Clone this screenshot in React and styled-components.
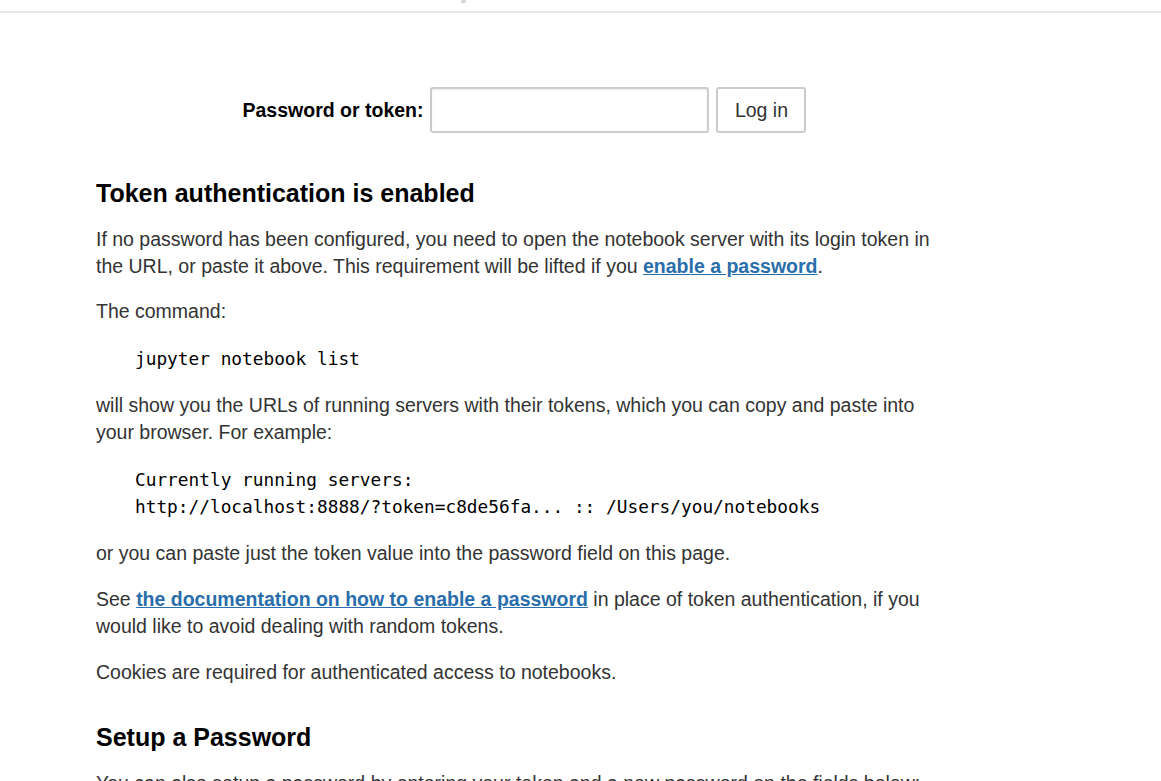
import React from "react";
import styled, { createGlobalStyle } from "styled-components";

const GlobalStyle = createGlobalStyle`
  html, body {
    margin: 0;
    padding: 0;
    background: #fff;
  }
  body {
    font-family: "Liberation Sans", Arial, sans-serif;
    font-size: 19.5px;
    line-height: 27px;
    color: #333;
  }
`;

//? Header
const Header = styled.header`
  height: 11px;
  border-bottom: 2px solid #e7e7e7;
  display: flex;
  padding-left: 460px;
  overflow: hidden;
`;

const Logo = styled.svg`
  display: block;
`;

//? Page
const Page = styled.main`
  width: 850px;
  padding: 74px 0 0 96px;
`;

const LoginForm = styled.form`
  display: flex;
  align-items: center;
  justify-content: center;
  gap: 7px;
  padding-left: 7px;
  margin-bottom: 47px;
`;

const Label = styled.label`
  font-weight: bold;
  color: #000;
`;

const TokenInput = styled.input`
  box-sizing: border-box;
  width: 279px;
  height: 46px;
  border: 2px solid #ccc;
  border-radius: 3px;
  box-shadow: inset 0 1px 2px rgba(0, 0, 0, 0.08);
  padding: 6px 12px;
  font: inherit;
  outline: none;
`;

const LoginButton = styled.button`
  box-sizing: border-box;
  height: 46px;
  width: 90px;
  background: #fff;
  border: 2px solid #ccc;
  border-radius: 3px;
  color: #333;
  font-family: "Liberation Sans", Arial, sans-serif;
  font-size: 19.5px;
  padding: 0;
`;

const Heading = styled.h3`
  font-size: 25px;
  line-height: 27px;
  font-weight: bold;
  color: #000;
  margin: ${(p) => (p.$spaced ? "38px" : "0")} 0 19px;
`;

const Para = styled.p`
  margin: 0 0 ${(p) => p.$gap || 18}px;
`;

const Link = styled.a`
  color: #296eaa;
  font-weight: bold;
  text-decoration: underline;
`;

const CodeBlock = styled.pre`
  margin: 0 0 18px;
  padding: 2px 0 2px 39px;
  font-family: "DejaVu Sans Mono", monospace;
  font-size: 17.8px;
  line-height: 27px;
  color: #000;
  white-space: pre;
`;

const App = () => {
  return (
    <>
      <GlobalStyle />
      <Header>
        <Logo width='7' height='7' viewBox='0 0 7 7'>
          <ellipse cx='3.5' cy='1.5' rx='2.5' ry='2' fill='#d6d6d6' />
        </Logo>
      </Header>
      <Page>
        <LoginForm onSubmit={(e) => e.preventDefault()}>
          <Label htmlFor='password_input'>Password or token:</Label>
          <TokenInput type='password' id='password_input' />
          <LoginButton type='submit'>Log in</LoginButton>
        </LoginForm>

        <Heading>Token authentication is enabled</Heading>
        <Para>
          If no password has been configured, you need to open the notebook
          server with its login token in the URL, or paste it above. This
          requirement will be lifted if you{" "}
          <Link href='#'>enable a password</Link>.
        </Para>
        <Para>The command:</Para>
        <CodeBlock>jupyter notebook list</CodeBlock>
        <Para>
          will show you the URLs of running servers with their tokens, which
          you can copy and paste into your browser. For example:
        </Para>
        <CodeBlock>
          {`Currently running servers:
http://localhost:8888/?token=c8de56fa... :: /Users/you/notebooks`}
        </CodeBlock>
        <Para $gap={19}>
          or you can paste just the token value into the password field on
          this page.
        </Para>
        <Para $gap={19}>
          See{" "}
          <Link href='#'>the documentation on how to enable a password</Link>{" "}
          in place of token authentication, if you would like to avoid dealing
          with random tokens.
        </Para>
        <Para>Cookies are required for authenticated access to notebooks.</Para>

        <Heading $spaced>Setup a Password</Heading>
        <Para>
          You can also setup a password by entering your token and a new
          password on the fields below:
        </Para>
      </Page>
    </>
  );
};

export default App;
